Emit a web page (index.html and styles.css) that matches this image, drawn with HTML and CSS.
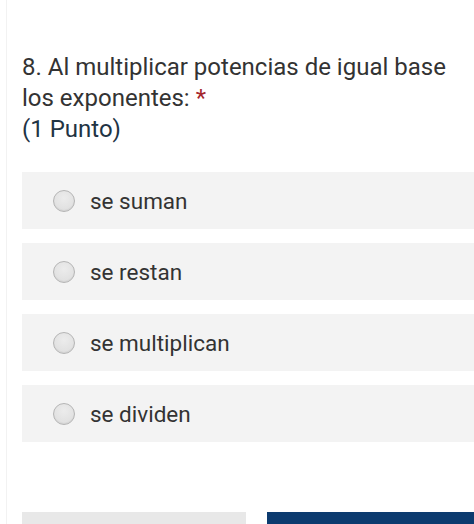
FILE: index.html
```html
<!DOCTYPE html>
<html lang="es">
<head>
<meta charset="utf-8">
<link rel="stylesheet" href="styles.css">
</head>
<body>
<div class="card">
  <div class="question">
    <div class="title">8. Al multiplicar potencias de igual base los exponentes: <span class="req">*</span></div>
    <div class="points">(1 Punto)</div>
  </div>
  <div class="options">
    <label class="option"><span class="radio"></span><span class="label">se suman</span></label>
    <label class="option"><span class="radio"></span><span class="label">se restan</span></label>
    <label class="option"><span class="radio"></span><span class="label">se multiplican</span></label>
    <label class="option"><span class="radio"></span><span class="label">se dividen</span></label>
  </div>
  <div class="actions">
    <div class="btn btn-back"></div>
    <div class="btn btn-next"></div>
  </div>
</div>
</body>
</html>
```
FILE: styles.css
```css
html, body {
  margin: 0;
  padding: 0;
  background: #ffffff;
  overflow: hidden;
}
body {
  font-family: Roboto, "Liberation Sans", Arial, sans-serif;
  color: #333333;
}
.card {
  margin-left: 6px;
  border-left: 1px solid #f2f2f2;
  padding: 52px 0 0 15px;
}
.question {
  font-size: 24px;
  line-height: 31px;
  color: #333333;
  padding-right: 10px;
}
.req {
  color: #a4262c;
}
.points {
  color: #1f3444;
}
.options {
  margin-top: 27px;
  display: flex;
  flex-direction: column;
  gap: 14px;
}
.option {
  display: flex;
  align-items: center;
  height: 57px;
  background: #f3f3f3;
  padding-left: 31px;
  margin-right: -10px;
}
.radio {
  width: 20px;
  height: 20px;
  border-radius: 50%;
  border: 1px solid #b5b5b5;
  background: radial-gradient(circle at 50% 35%, #ececec 0%, #dcdcdc 100%);
  box-shadow: inset 0 -1px 1px rgba(0,0,0,0.05);
  flex: none;
}
.label {
  margin-left: 15px;
  font-size: 22.5px;
  color: #333333;
}
.actions {
  margin-top: 70px;
  display: flex;
  gap: 21px;
  margin-right: -10px;
}
.btn {
  height: 40px;
}
.btn-back {
  width: 224px;
  background: #e8e8e8;
}
.btn-next {
  flex: 1;
  background: #0c3b6f;
}
```
